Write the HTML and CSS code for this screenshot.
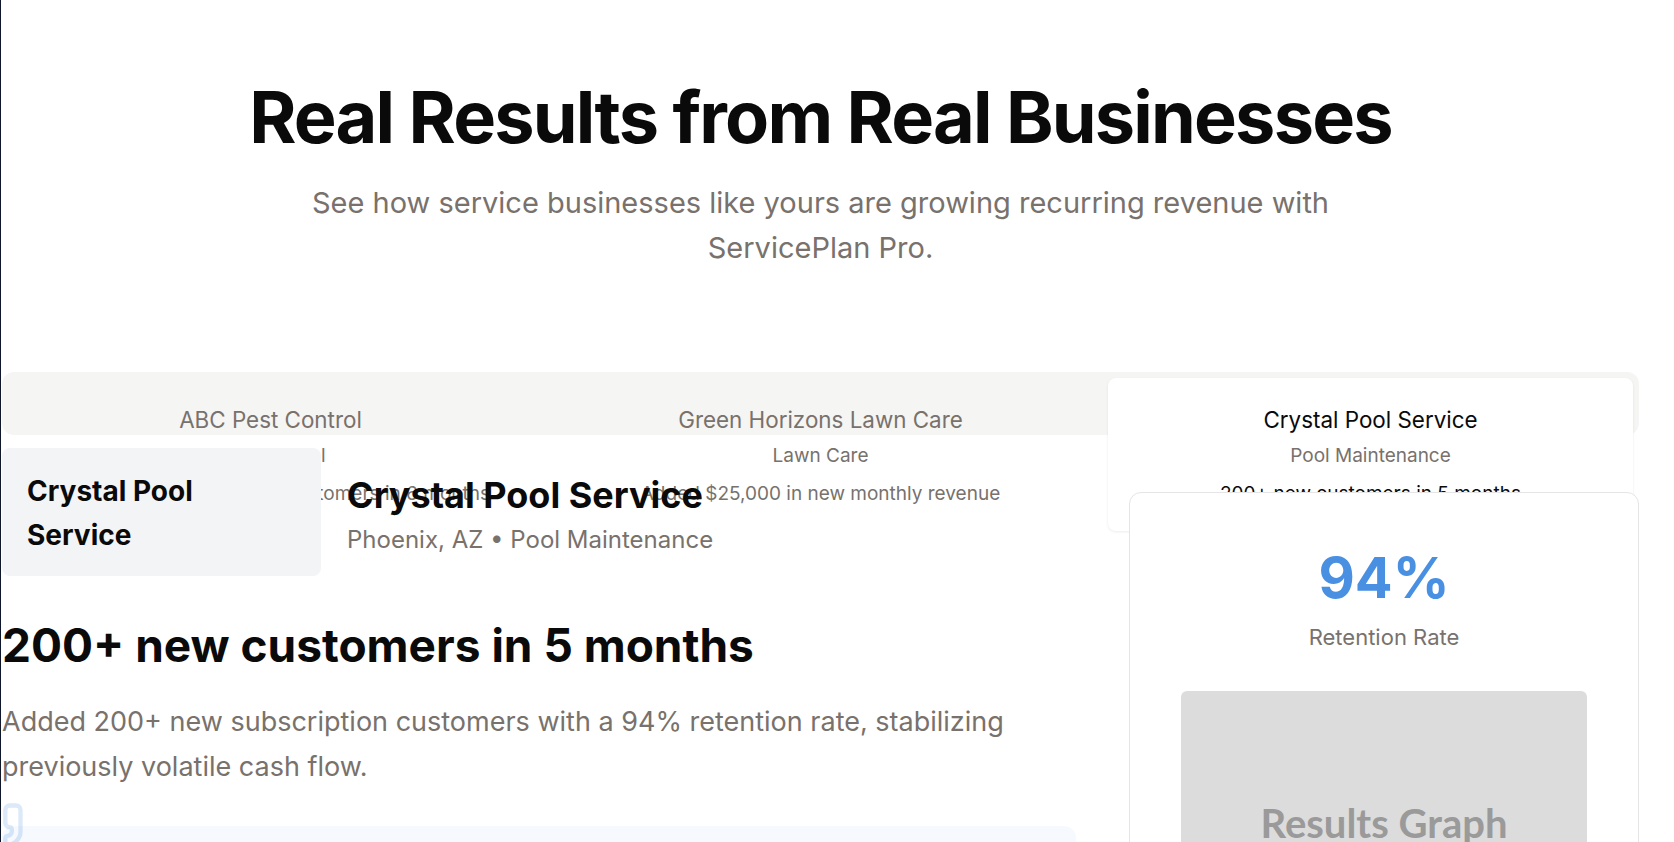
FILE: index.html
```html
<!DOCTYPE html>
<html lang="en">
<head>
<meta charset="utf-8">
<title>Real Results from Real Businesses</title>
<link rel="stylesheet" href="styles.css">
</head>
<body>
<main class="page">
  <section class="results">
    <header class="intro">
      <h1 class="intro-title">Real Results from Real Businesses</h1>
      <p class="intro-sub">See how service businesses like yours are growing recurring revenue with ServicePlan Pro.</p>
    </header>

    <div class="tabs">
      <button class="tab">
        <span class="tab-name">ABC Pest Control</span>
        <span class="tab-industry">Pest Control</span>
        <span class="tab-result">Gained 150+ subscription customers in 6 months</span>
      </button>
      <button class="tab">
        <span class="tab-name">Green Horizons Lawn Care</span>
        <span class="tab-industry">Lawn Care</span>
        <span class="tab-result">Added $25,000 in new monthly revenue</span>
      </button>
      <button class="tab tab-active">
        <span class="tab-name">Crystal Pool Service</span>
        <span class="tab-industry">Pool Maintenance</span>
        <span class="tab-result">200+ new customers in 5 months</span>
      </button>
    </div>

    <div class="panel">
      <div class="story">
        <div class="story-head">
          <div class="logo"><span class="logo-text">Crystal Pool Service</span></div>
          <div class="story-title">
            <h3 class="story-name">Crystal Pool Service</h3>
            <p class="story-meta">Phoenix, AZ • Pool Maintenance</p>
          </div>
        </div>
        <h4 class="story-headline">200+ new customers in 5 months</h4>
        <p class="story-text">Added 200+ new subscription customers with a 94% retention rate, stabilizing previously volatile cash flow.</p>
        <blockquote class="quote">
          <svg class="quote-icon" viewBox="0 0 24 24" fill="none" stroke="currentColor" stroke-width="2" stroke-linecap="round" stroke-linejoin="round" aria-hidden="true">
            <path d="M16 3a2 2 0 0 0-2 2v6a2 2 0 0 0 2 2 1 1 0 0 1 1 1v1a2 2 0 0 1-2 2 1 1 0 0 0-1 1v2a1 1 0 0 0 1 1 6 6 0 0 0 6-6V5a2 2 0 0 0-2-2z"/>
            <path d="M5 3a2 2 0 0 0-2 2v6a2 2 0 0 0 2 2 1 1 0 0 1 1 1v1a2 2 0 0 1-2 2 1 1 0 0 0-1 1v2a1 1 0 0 0 1 1 6 6 0 0 0 6-6V5a2 2 0 0 0-2-2z"/>
          </svg>
          <p class="quote-text">Our customers love the predictability, and so do we.</p>
        </blockquote>
      </div>

      <aside class="stats">
        <div class="stat-value">94%</div>
        <div class="stat-label">Retention Rate</div>
        <div class="graph"><span class="graph-text">Results Graph</span></div>
      </aside>
    </div>
  </section>
</main>
</body>
</html>
```

FILE: styles.css
```css
* {
  box-sizing: border-box;
}

html, body {
  margin: 0;
  padding: 0;
  background: #ffffff;
}

body {
  border-left: 1px solid #0f172a;
  min-height: 842px;
  font-family: Inter, "Liberation Sans", sans-serif;
  color: #0a0a0a;
  overflow: hidden;
}

.page {
  width: 1637px;
  margin-left: 1px;
}

.results {
  padding-top: 77px;
}

.intro {
  text-align: center;
}

.intro-title {
  margin: 0;
  font-size: 72px;
  line-height: 1.1;
  font-weight: 700;
  letter-spacing: -0.025em;
  color: #0a0a0a;
}

.intro-sub {
  margin: 24px auto 0;
  max-width: 1100px;
  font-size: 29px;
  line-height: 45px;
  color: #78716c;
}

.tabs {
  margin-top: 102px;
  height: 63px;
  padding: 6px;
  background: #f5f5f4;
  border-radius: 12px;
  display: flex;
  gap: 25px;
  align-items: flex-start;
}

.tab {
  flex: 1 1 0;
  display: flex;
  flex-direction: column;
  align-items: center;
  padding: 25px 16px 23px;
  border: 0;
  border-radius: 8px;
  background: transparent;
  font-family: inherit;
  text-align: center;
  color: #78716c;
  cursor: pointer;
}

.tab-active {
  background: #ffffff;
  box-shadow: 0 1px 3px rgba(0, 0, 0, 0.08);
  color: #0a0a0a;
}

.tab-name {
  font-size: 22.4px;
  line-height: 33px;
}

.tab-industry {
  margin-top: 6px;
  font-size: 19px;
  line-height: 28px;
  color: #78716c;
}

.tab-result {
  margin-top: 10px;
  font-size: 19px;
  line-height: 28px;
}

.panel {
  margin-top: 13px;
  display: grid;
  grid-template-columns: 1074px 510px;
  column-gap: 53px;
  align-items: start;
}

.story-head {
  display: flex;
  align-items: center;
  gap: 26px;
}

.logo {
  width: 319px;
  height: 128px;
  flex: none;
  background: #f3f4f6;
  border-radius: 8px;
  padding: 21px 25px 19px;
}

.logo-text {
  display: block;
  max-width: 200px;
  font-size: 28px;
  line-height: 44px;
  font-weight: 700;
  color: #0a0a0a;
}

.story-title {
  padding-top: 6px;
}

.story-name {
  margin: 0;
  font-size: 36px;
  line-height: 45px;
  font-weight: 700;
}

.story-meta {
  margin: 4px 0 0;
  font-size: 24px;
  line-height: 36px;
  color: #78716c;
}

.story-headline {
  margin: 42px 0 0;
  font-size: 46px;
  line-height: 1.2;
  font-weight: 700;
}

.story-text {
  margin: 26px 0 0;
  font-size: 27px;
  line-height: 45px;
  color: #78716c;
}

.quote {
  position: relative;
  margin: 37px 0 0;
  padding: 40px 48px;
  background: rgba(74, 144, 226, 0.05);
  border-radius: 12px;
}

.quote-icon {
  position: absolute;
  top: -27px;
  left: -27px;
  width: 52px;
  height: 52px;
  color: rgba(74, 144, 226, 0.2);
}

.quote-text {
  margin: 0;
  font-size: 24px;
  line-height: 1.6;
  font-style: italic;
  color: #44403c;
}

.stats {
  margin-top: 44px;
  background: #ffffff;
  border: 1px solid #e5e5e5;
  border-radius: 12px;
  padding: 52px 0 48px;
  display: flex;
  flex-direction: column;
  align-items: center;
}

.stat-value {
  font-size: 56px;
  line-height: 1.2;
  font-weight: 700;
  color: #4a90e2;
}

.stat-label {
  margin-top: 9px;
  font-size: 22px;
  line-height: 33px;
  color: #78716c;
}

.graph {
  margin-top: 37px;
  width: 80%;
  height: 264px;
  background: #dcdcdc;
  border-radius: 6px;
  display: flex;
  align-items: center;
  justify-content: center;
}

.graph-text {
  font-family: Lato, "Liberation Sans", sans-serif;
  font-size: 40px;
  font-weight: 700;
  color: #9a9a9a;
}
```
